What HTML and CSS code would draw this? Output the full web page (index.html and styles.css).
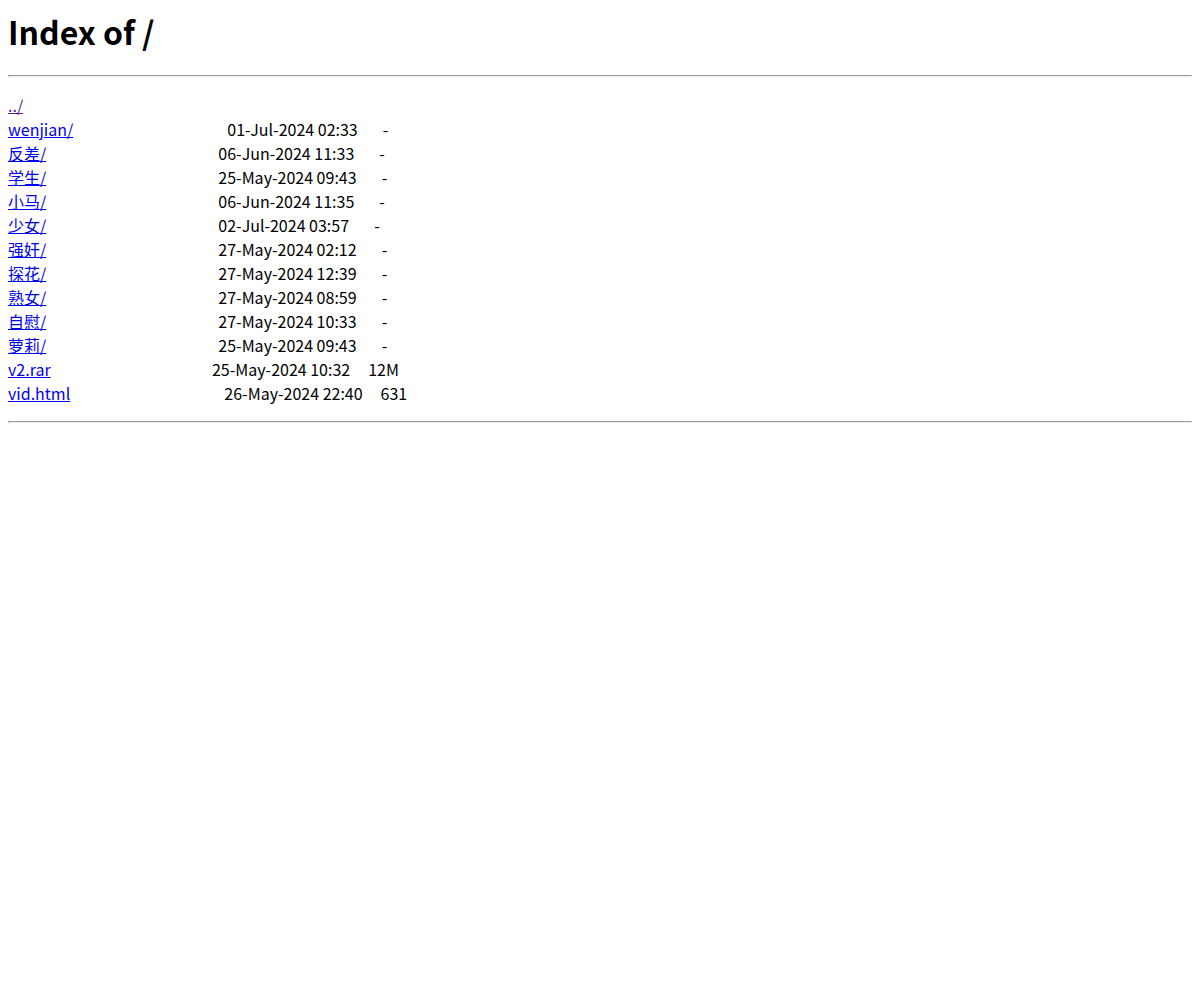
FILE: index.html
```html
<!DOCTYPE html>
<html lang="zh">
<head>
  <meta charset="UTF-8" />
  <title>Index of /</title>
  <link rel="stylesheet" href="styles.css">
</head>
<body>
<h1>Index of /</h1><hr><pre><a class="visited" href="../">../</a>
<a href="wenjian/">wenjian/</a>                                           01-Jul-2024 02:33       -
<a href="反差/">反差/</a>                                                06-Jun-2024 11:33       -
<a href="学生/">学生/</a>                                                25-May-2024 09:43       -
<a href="小马/">小马/</a>                                                06-Jun-2024 11:35       -
<a href="少女/">少女/</a>                                                02-Jul-2024 03:57       -
<a href="强奸/">强奸/</a>                                                27-May-2024 02:12       -
<a href="探花/">探花/</a>                                                27-May-2024 12:39       -
<a href="熟女/">熟女/</a>                                                27-May-2024 08:59       -
<a href="自慰/">自慰/</a>                                                27-May-2024 10:33       -
<a href="萝莉/">萝莉/</a>                                                25-May-2024 09:43       -
<a href="v2.rar">v2.rar</a>                                             25-May-2024 10:32     12M
<a href="vid.html">vid.html</a>                                           26-May-2024 22:40     631
</pre><hr>
</body>
</html>
```

FILE: styles.css
```css
body {
  margin: 8px;
  font-family: "Noto Sans CJK SC", "Noto Sans", sans-serif;
  color: #000;
  background: #fff;
}
h1 {
  margin: 0 0 21.44px;
  font-size: 32px;
  line-height: 46px;
  font-weight: bold;
}
hr {
  margin: 8px 0;
  height: 0;
  border-style: solid;
  border-width: 1px;
  border-color: #9a9a9a #eeeeee #eeeeee #9a9a9a;
}
pre {
  margin: 16px 0;
  font-family: "Noto Sans CJK SC", "Noto Sans", sans-serif;
  font-size: 16px;
  line-height: 24px;
}
a {
  color: #0000ee;
}
a.visited {
  color: #551a8b;
}
```
